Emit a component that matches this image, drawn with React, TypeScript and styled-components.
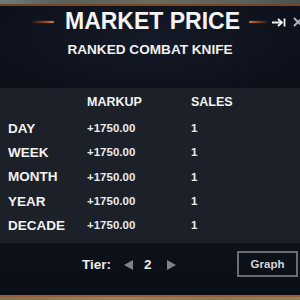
import { Fragment } from 'react';
import styled, { createGlobalStyle } from 'styled-components';

const Global = createGlobalStyle`
  html, body { margin: 0; padding: 0; background: #1c2029; }
  body { font-family: 'Liberation Sans', Arial, sans-serif; }
`;

const Frame = styled.div`
  width: 300px;
  height: 300px;
  display: flex;
  flex-direction: column;
  overflow: hidden;
  background: #1c2029;
`;

const Scene = styled.div<{ $h: number; $bottom?: boolean }>`
  height: ${(p) => p.$h}px;
  flex-shrink: 0;
  background: ${(p) =>
    p.$bottom
      ? 'linear-gradient(90deg, #7d7252, #948660 40%, #867a56 70%, #8f8360)'
      : 'linear-gradient(90deg, #6d7d7a, #55605a 20%, #6a6a5c 50%, #5a625c 80%, #48524e)'};
`;

const Panel = styled.div`
  flex: 1;
  display: flex;
  flex-direction: column;
  border-top: 2px solid #7a4424;
  border-bottom: 2px solid #9c5a2e;
`;

const Header = styled.div`
  height: 82px;
  position: relative;
  display: flex;
  flex-direction: column;
  align-items: center;
  padding-top: 3px;
  box-sizing: border-box;
  background: radial-gradient(ellipse at 50% 40%, #141a27 0%, #0e121c 70%, #0b0f18 100%);
`;

const TitleRow = styled.div`
  display: flex;
  align-items: center;
  height: 24px;
`;

const Glow = styled.div<{ $side: 'left' | 'right' }>`
  width: ${(p) => (p.$side === 'left' ? 22 : 19)}px;
  height: 2px;
  margin: ${(p) => (p.$side === 'left' ? '1px 11px 0 0' : '1px 0 0 9px')};
  border-radius: 1px;
  background: linear-gradient(
    ${(p) => (p.$side === 'left' ? '90deg' : '270deg')},
    rgba(110, 55, 20, 0.1),
    #a8561f 70%,
    #d27a38
  );
  box-shadow: 0 0 2px rgba(180, 90, 30, 0.4);
`;

const Title = styled.h1`
  margin: 0;
  font-size: 23px;
  line-height: 24px;
  font-weight: bold;
  color: #f4f4f4;
  white-space: nowrap;
`;

const Subtitle = styled.h2`
  margin: 9px 0 0;
  font-size: 13.6px;
  line-height: 16px;
  font-weight: bold;
  color: #f0f0f0;
  white-space: nowrap;
`;

const Controls = styled.div`
  position: absolute;
  top: 11px;
  left: 271px;
  display: flex;
  align-items: center;
  gap: 7px;
`;

const Table = styled.div`
  height: 155px;
  box-sizing: border-box;
  padding-left: 8px;
  display: grid;
  grid-template-columns: 79px 104px 1fr;
  grid-template-rows: 28px repeat(5, 24.3px);
  align-items: center;
  background: #1c2029;
`;

const Cell = styled.div<{ $kind: 'head' | 'label' | 'value' }>`
  font-weight: bold;
  white-space: nowrap;
  color: ${(p) => (p.$kind === 'value' ? '#ebebeb' : '#f2f2f2')};
  font-size: ${(p) => (p.$kind === 'label' ? 13.5 : p.$kind === 'head' ? 12.5 : 11.5)}px;
`;

const Footer = styled.div`
  flex: 1;
  display: flex;
  align-items: flex-start;
  padding: 8px 2px 0 82px;
  box-sizing: border-box;
  background: linear-gradient(180deg, #0d111a, #0a0e17);
`;

const Tier = styled.div`
  height: 26px;
  display: flex;
  align-items: center;
  color: #ececec;
  font-weight: bold;
  font-size: 13.5px;
`;

const Arrow = styled.span<{ $dir: 'left' | 'right' }>`
  width: 0;
  height: 0;
  border-top: 5px solid transparent;
  border-bottom: 5px solid transparent;
  ${(p) =>
    p.$dir === 'left'
      ? 'border-right: 9px solid #7f8387; margin: 1px 11px 0 13px;'
      : 'border-left: 9px solid #7f8387; margin: 1px 0 0 15px;'}
`;

const GraphButton = styled.button`
  margin-left: auto;
  width: 61px;
  height: 26px;
  box-sizing: border-box;
  border: 2px solid #6a6d72;
  background: #0c1018;
  color: #d6d6d6;
  font-family: 'Liberation Sans', Arial, sans-serif;
  font-weight: bold;
  font-size: 11.5px;
  padding: 0;
`;

const rows = ['DAY', 'WEEK', 'MONTH', 'YEAR', 'DECADE'];

export default function App() {
  return (
    <>
      <Global />
      <Frame>
        <Scene $h={4} />
        <Panel>
          <Header>
            <TitleRow>
              <Glow $side="left" />
              <Title>MARKET PRICE</Title>
              <Glow $side="right" />
            </TitleRow>
            <Subtitle>RANKED COMBAT KNIFE</Subtitle>
            <Controls>
              <svg width="15" height="9" viewBox="0 0 15 9">
                <path d="M1 4.5H11" stroke="#f2f2f2" strokeWidth="2" />
                <path d="M7 1L11 4.5L7 8" stroke="#f2f2f2" strokeWidth="1.8" fill="none" />
                <path d="M13.5 0.5V8.5" stroke="#f2f2f2" strokeWidth="1.8" />
              </svg>
              <svg width="10" height="10" viewBox="0 0 10 10">
                <path d="M1 1L9 9M9 1L1 9" stroke="#b8bcc2" strokeWidth="1.8" />
              </svg>
            </Controls>
          </Header>
          <Table>
            <span />
            <Cell $kind="head">MARKUP</Cell>
            <Cell $kind="head">SALES</Cell>
            {rows.map((r) => (
              <Fragment key={r}>
                <Cell $kind="label">{r}</Cell>
                <Cell $kind="value">+1750.00</Cell>
                <Cell $kind="value">1</Cell>
              </Fragment>
            ))}
          </Table>
          <Footer>
            <Tier>
              Tier:
              <Arrow $dir="left" />
              2
              <Arrow $dir="right" />
            </Tier>
            <GraphButton>Graph</GraphButton>
          </Footer>
        </Panel>
        <Scene $h={3} $bottom />
      </Frame>
    </>
  );
}
